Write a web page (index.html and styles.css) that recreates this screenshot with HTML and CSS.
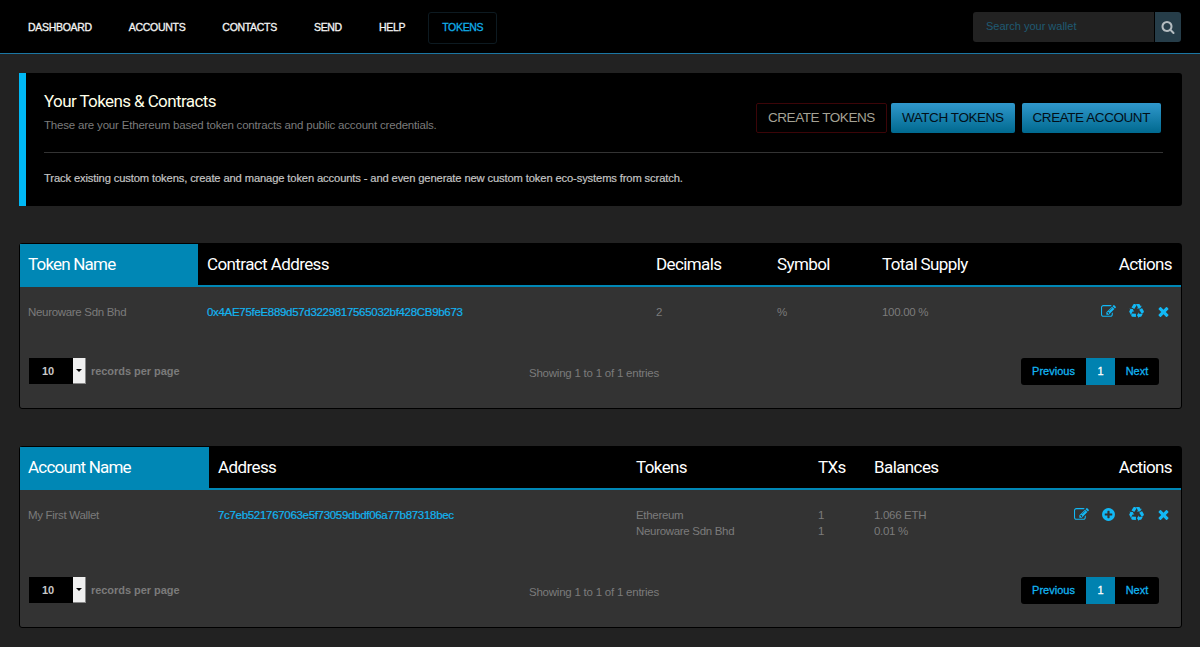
FILE: index.html
```
<!DOCTYPE html>
<html lang="en">
<head>
  <meta charset="UTF-8">
  <title>Tokens</title>
  <link rel="stylesheet" href="styles.css">
</head>
<body>

  <!-- icon shapes, used further down -->
  <svg class="sprite" width="0" height="0">
    <symbol id="i-search" viewBox="0 0 1792 1792"><path d="M1216 832q0-185-131.5-316.5t-316.5-131.5-316.5 131.5-131.5 316.5 131.5 316.5 316.5 131.5 316.5-131.5 131.5-316.5zm512 832q0 52-38 90t-90 38q-54 0-90-38l-343-342q-179 124-399 124-143 0-273.5-55.5t-225-150-150-225-55.5-273.5 55.5-273.5 150-225 225-150 273.5-55.5 273.5 55.5 225 150 150 225 55.5 273.5q0 220-124 399l343 343q37 37 37 90z"/></symbol>
    <symbol id="i-edit" viewBox="0 0 1792 1792"><path d="M888 1184l116-116-152-152-116 116v56h96v96h56zm440-720q-16-16-33 1l-350 350q-17 17-1 33t33-1l350-350q17-17 1-33zm80 594v190q0 119-84.5 203.5t-203.5 84.5h-832q-119 0-203.5-84.5t-84.5-203.5v-832q0-119 84.5-203.5t203.5-84.5h832q63 0 117 25 15 7 18 23 3 17-9 29l-49 49q-14 14-32 8-23-6-45-6h-832q-66 0-113 47t-47 113v832q0 66 47 113t113 47h832q66 0 113-47t47-113v-126q0-13 9-22l64-64q15-15 35-7t20 29zm-96-738l288 288-672 672h-288v-288zm444 132l-92 92-288-288 92-92q28-28 68-28t68 28l152 152q28 28 28 68t-28 68z"/></symbol>
    <symbol id="i-plus" viewBox="0 0 1792 1792"><path d="M1344 960v-128q0-26-19-45t-45-19h-256v-256q0-26-19-45t-45-19h-128q-26 0-45 19t-19 45v256h-256q-26 0-45 19t-19 45v128q0 26 19 45t45 19h256v256q0 26 19 45t45 19h128q26 0 45-19t19-45v-256h256q26 0 45-19t19-45zm320-64q0 209-103 385.5t-279.5 279.5-385.5 103-385.5-103-279.5-279.5-103-385.5 103-385.5 279.5-279.5 385.5-103 385.5 103 279.5 279.5 103 385.5z"/></symbol>
    <symbol id="i-recycle" viewBox="0 0 1792 1792"><path d="M836 1169l-15 368-2 22-420-29q-36-3-67-31.5t-47-65.5q-11-27-14.5-55t4-65 12-55 21.5-64 19-53q78 12 509 28zm-387-586l180 379-147-92q-63 72-111.5 144.5t-72.5 125-39.5 94.5-18.5 63l-4 21-190-357q-17-26-18-56t6-47l8-18q35-63 114-188l-140-86zm1231 517l-188 359q-12 29-36.5 46.5t-43.5 20.5l-18 4q-71 7-219 12l8 164-230-367 211-362 7 173q170 16 283 5t170-33zm-785-924q-47 63-265 435l-317-187-19-12 225-356q20-31 60-45t80-10q24 2 48.5 12t42 21 41.5 33 36 34.5 36 39.5 32 35zm655 307l212 363q18 37 12.5 76t-27.5 74q-13 20-33 37t-38 28-48.5 22-47 16-51.5 14-46 12q-34-72-265-436l313-195zm-143-226l142-83-220 373-419-20 151-86q-34-89-75-166t-75.5-123.5-64.5-80-47-46.5l-17-13 405 1q31-3 58 10.5t39 28.5l11 15q39 61 112 190z"/></symbol>
    <symbol id="i-times" viewBox="0 0 1792 1792"><path d="M1490 1322q0 40-28 68l-136 136q-28 28-68 28t-68-28l-294-294-294 294q-28 28-68 28t-68-28l-136-136q-28-28-28-68t28-68l294-294-294-294q-28-28-28-68t28-68l136-136q28-28 68-28t68 28l294 294 294-294q28-28 68-28t68 28l136 136q28 28 28 68t-28 68l-294 294 294 294q28 28 28 68z"/></symbol>
  </svg>

  <header class="navbar">
    <nav class="menu">
      <a href="#">DASHBOARD</a>
      <a href="#">ACCOUNTS</a>
      <a href="#">CONTACTS</a>
      <a href="#">SEND</a>
      <a href="#">HELP</a>
      <a href="#" class="active">TOKENS</a>
    </nav>
    <form class="search">
      <input type="text" placeholder="Search your wallet">
      <button type="button"><svg class="icon"><use href="#i-search"/></svg></button>
    </form>
  </header>

  <main>
    <section class="intro">
      <div class="intro-top">
        <div>
          <h1>Your Tokens &amp; Contracts</h1>
          <p class="sub">These are your Ethereum based token contracts and public account credentials.</p>
        </div>
        <div class="buttons">
          <a href="#" class="btn btn-outline">CREATE TOKENS</a>
          <a href="#" class="btn">WATCH TOKENS</a>
          <a href="#" class="btn btn-account">CREATE ACCOUNT</a>
        </div>
      </div>
      <p class="lead">Track existing custom tokens, create and manage token accounts - and even generate new custom token eco-systems from scratch.</p>
    </section>

    <section class="panel">
      <div class="row head tokens">
        <span class="first">Token Name</span>
        <span>Contract Address</span>
        <span>Decimals</span>
        <span>Symbol</span>
        <span>Total Supply</span>
        <span class="last">Actions</span>
      </div>
      <div class="row body tokens">
        <span>Neuroware Sdn Bhd</span>
        <a href="#" class="hash">0x4AE75feE889d57d3229817565032bf428CB9b673</a>
        <span>2</span>
        <span>%</span>
        <span>100.00 %</span>
        <div class="actions">
          <svg class="icon"><use href="#i-edit"/></svg>
          <svg class="icon"><use href="#i-recycle"/></svg>
          <svg class="icon"><use href="#i-times"/></svg>
        </div>
      </div>
      <div class="foot">
        <div class="records">
          <div class="select"><span>10</span><i></i></div>
          <label>records per page</label>
        </div>
        <span class="showing">Showing 1 to 1 of 1 entries</span>
        <div class="pager">
          <a href="#" class="prev">Previous</a>
          <a href="#" class="current">1</a>
          <a href="#" class="next">Next</a>
        </div>
      </div>
    </section>

    <section class="panel panel-accounts">
      <div class="row head accounts">
        <span class="first">Account Name</span>
        <span>Address</span>
        <span>Tokens</span>
        <span>TXs</span>
        <span>Balances</span>
        <span class="last">Actions</span>
      </div>
      <div class="row body accounts">
        <span>My First Wallet</span>
        <a href="#" class="hash">7c7eb521767063e5f73059dbdf06a77b87318bec</a>
        <span>Ethereum<br>Neuroware Sdn Bhd</span>
        <span>1<br>1</span>
        <span>1.066 ETH<br>0.01 %</span>
        <div class="actions">
          <svg class="icon"><use href="#i-edit"/></svg>
          <svg class="icon"><use href="#i-plus"/></svg>
          <svg class="icon"><use href="#i-recycle"/></svg>
          <svg class="icon"><use href="#i-times"/></svg>
        </div>
      </div>
      <div class="foot">
        <div class="records">
          <div class="select"><span>10</span><i></i></div>
          <label>records per page</label>
        </div>
        <span class="showing">Showing 1 to 1 of 1 entries</span>
        <div class="pager">
          <a href="#" class="prev">Previous</a>
          <a href="#" class="current">1</a>
          <a href="#" class="next">Next</a>
        </div>
      </div>
    </section>
  </main>

</body>
</html>
```
FILE: styles.css
```
* {
  box-sizing: border-box;
}

body {
  margin: 0;
  height: 647px;
  overflow: hidden;
  background: #222;
  color: #7b7b7b;
  font-family: "Liberation Sans", Arial, sans-serif;
  font-size: 11.5px;
  line-height: 16px;
}

a {
  color: #12b4f0;
  text-decoration: none;
}

h1,
p {
  margin: 0;
}

.sprite {
  display: none;
}

.icon {
  display: block;
  width: 15px;
  height: 15px;
  fill: #12b8f5;
}

/* top bar */
.navbar {
  display: flex;
  justify-content: space-between;
  height: 54px;
  padding: 12px 19px 0 14px;
  background: #000;
  border-bottom: 1px solid #1b76a3;
}

.menu {
  display: flex;
  gap: 9px;
}

.menu a {
  height: 32px;
  padding: 0 13px;
  border: 1px solid transparent;
  border-radius: 3px;
  color: #f4f4f4;
  font-size: 10.5px;
  letter-spacing: -0.3px;
  line-height: 28px;
  -webkit-text-stroke: 0.3px;
}

.menu .active {
  border-color: #0d1a21;
  color: #10aee8;
}

.search {
  display: flex;
  gap: 1px;
  height: 30px;
}

.search input {
  width: 181px;
  padding: 0 13px 2px;
  background: #222;
  border: 0;
  border-radius: 3px 0 0 3px;
  font: 11px "Liberation Sans", Arial, sans-serif;
}

.search input::placeholder {
  color: #1f5a72;
}

.search button {
  width: 26px;
  padding: 0 0 0 6px;
  background: #263d49;
  border: 0;
  border-radius: 0 3px 3px 0;
}

.search .icon {
  width: 14px;
  height: 14px;
  fill: #b4bcc0;
}

main {
  padding: 19px 18px 0 19px;
}

/* intro box */
.intro {
  height: 133px;
  padding: 17px 19px 0 18px;
  background: #000;
  border-left: 7px solid #00b8f5;
  border-radius: 0 3px 3px 0;
}

.intro-top {
  display: flex;
  justify-content: space-between;
  height: 63px;
  border-bottom: 1px solid #333;
}

h1,
.head {
  font-family: Roboto, sans-serif;
  font-weight: 400;
  font-size: 17px;
  letter-spacing: -0.6px;
  line-height: 22px;
}

h1 {
  color: #ffffe8;
}

.sub {
  padding-top: 5px;
  letter-spacing: -0.19px;
}

.lead {
  padding-top: 17px;
  color: #c4c4c4;
  font-size: 11.2px;
  letter-spacing: -0.13px;
  -webkit-text-stroke: 0.2px;
}

.buttons {
  display: flex;
  padding: 13px 2px 0 0;
}

.btn {
  height: 30px;
  padding: 0 11px;
  background: linear-gradient(#3098cc, #00698f);
  border-radius: 2px;
  margin-left: 4px;
  color: #020f18;
  font-size: 13.5px;
  letter-spacing: -0.43px;
  line-height: 29px;
}

.btn-outline {
  background: none;
  border: 1px solid #3c0508;
  color: #a5a295;
  line-height: 27px;
}

.btn-account {
  margin-left: 7px;
}

/* tables */
.panel {
  height: 166px;
  margin-top: 37px;
  background: #333;
  border: 1px solid #000;
  border-radius: 3px;
}

.panel-accounts {
  height: 182px;
}

.row {
  display: grid;
}

.tokens {
  grid-template-columns: 178px 449px 121px 105px 1fr 100px;
}

.accounts {
  grid-template-columns: 189px 418px 182px 56px 1fr 120px;
}

.head {
  height: 43px;
  background: #000;
  border-bottom: 2px solid #0087b5;
  color: #fff;
  line-height: 40px;
}

.head span {
  padding-left: 9px;
}

.head .first {
  height: 42px;
  padding-left: 8px;
  background: #0087b5;
  letter-spacing: -0.8px;
}

.head .last {
  padding-right: 9px;
  text-align: right;
}

.body {
  padding-top: 17px;
  letter-spacing: -0.31px;
}

.body > * {
  padding-left: 9px;
}

.body > :first-child {
  padding-left: 8px;
}

.hash {
  -webkit-text-stroke: 0.2px;
}

.body .actions {
  display: flex;
  justify-content: flex-end;
  gap: 12.5px;
  padding: 0 10px 0 0;
}

.foot {
  display: grid;
  grid-template-columns: 1fr 1fr 1fr;
  padding: 38px 22px 0 9px;
}

.records {
  display: flex;
  gap: 5px;
  font-size: 11px;
  font-weight: bold;
  line-height: 26px;
}

.records label {
  letter-spacing: -0.05px;
}

.select {
  display: flex;
  width: 57px;
  height: 26px;
  background: #000;
  color: #c8c8c8;
}

.select span {
  flex: 1;
  padding-left: 13px;
}

.select i {
  display: flex;
  justify-content: center;
  align-items: center;
  width: 13px;
  background: #f0f0f0;
  border-right: 1px solid #888;
  border-bottom: 1px solid #888;
}

.select i::after {
  content: "";
  border: 3px solid transparent;
  border-top-color: #000;
  border-bottom: 0;
}

.showing {
  padding-top: 7px;
  letter-spacing: -0.23px;
  text-align: center;
}

.pager {
  display: flex;
  justify-content: flex-end;
  font-size: 11px;
  line-height: 26px;
  -webkit-text-stroke: 0.3px;
}

.pager a {
  height: 27px;
  background: #000;
  text-align: center;
}

.pager .prev {
  width: 65px;
  border-radius: 3px 0 0 3px;
}

.pager .current {
  width: 29px;
  background: #0082b0;
  color: #fff;
}

.pager .next {
  width: 44px;
  border-radius: 0 3px 3px 0;
}
```
